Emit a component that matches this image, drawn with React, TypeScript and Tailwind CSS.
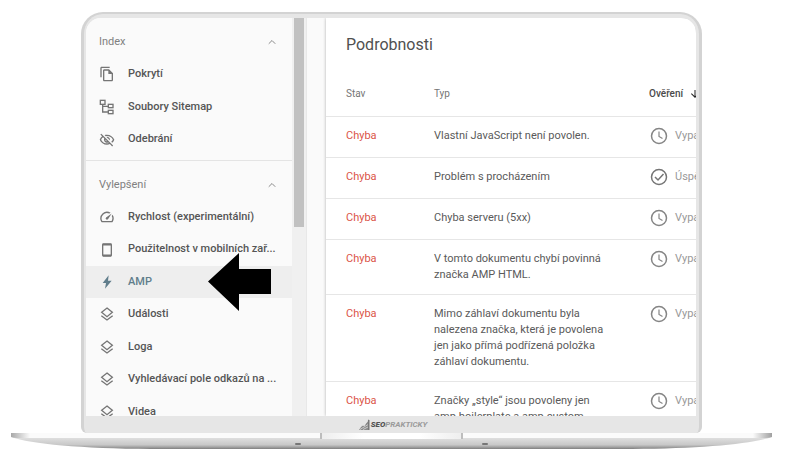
import React from "react";
import type { ReactNode } from "react";
import { ChevronUp } from "lucide-react";
import {
  MdArrowDownward,
  MdOutlineFileCopy,
  MdOutlineSpeed,
  MdOutlineVisibilityOff,
} from "react-icons/md";

function SitemapIcon() {
  return (
    <svg width="16" height="16" viewBox="0 0 24 24" fill="none" stroke="currentColor" strokeWidth="2">
      <rect x="2" y="2" width="7" height="6" />
      <rect x="14" y="8" width="7" height="5" />
      <rect x="14" y="17" width="7" height="5" />
      <path d="M5.500 8v11.500H14M5.500 11H14" />
    </svg>
  );
}

function PhoneIcon() {
  return (
    <svg width="16" height="16" viewBox="0 0 24 24" fill="none" stroke="currentColor" strokeWidth="2">
      <rect x="5.500" y="3" width="13" height="18" rx="1" />
      <path d="M6 4h12M6 20h12" strokeWidth="2.500" />
    </svg>
  );
}

function BoltIcon() {
  return (
    <svg width="16" height="16" viewBox="0 0 24 24" fill="currentColor">
      <path d="M14.500 2 5.500 13.500h5L9 22l10-12h-5.500z" />
    </svg>
  );
}

function LayersIcon() {
  return (
    <svg width="16" height="16" viewBox="0 0 24 24" fill="none" stroke="currentColor" strokeWidth="2">
      <path d="M12 3 20 9.500 12 16 4 9.500z" />
      <path d="M3.500 14.500 12 21l8.500-6.500" />
    </svg>
  );
}

function ClockIcon() {
  return (
    <svg className="shrink-0 text-[#858585]" width="18" height="18" viewBox="0 0 18 18" fill="none" stroke="currentColor" strokeWidth="1.500">
      <circle cx="9" cy="9" r="7.500" />
      <path d="M9 4.500V9.500L12.500 11.500" strokeWidth="1.200" />
    </svg>
  );
}

function PassedIcon() {
  return (
    <svg className="shrink-0 text-[#757575]" width="18" height="18" viewBox="0 0 18 18" fill="none" stroke="currentColor" strokeWidth="1.500">
      <circle cx="9" cy="9" r="7.500" />
      <path d="M5 9l3 3 5.500-6" />
    </svg>
  );
}

type Item = { label: string; icon: ReactNode; active?: boolean };

const indexItems: Item[] = [
  { label: "Pokrytí", icon: <MdOutlineFileCopy size={16} /> },
  { label: "Soubory Sitemap", icon: <SitemapIcon /> },
  { label: "Odebrání", icon: <MdOutlineVisibilityOff size={16} /> },
];

const enhancementItems: Item[] = [
  { label: "Rychlost (experimentální)", icon: <MdOutlineSpeed size={16} /> },
  { label: "Použitelnost v mobilních zař...", icon: <PhoneIcon /> },
  { label: "AMP", icon: <BoltIcon />, active: true },
  { label: "Události", icon: <LayersIcon /> },
  { label: "Loga", icon: <LayersIcon /> },
  { label: "Vyhledávací pole odkazů na ...", icon: <LayersIcon /> },
  { label: "Videa", icon: <LayersIcon /> },
];

const issues = [
  { type: "Vlastní JavaScript není povolen.", check: "Vypa" },
  { type: "Problém s procházením", check: "Úspě", passed: true },
  { type: "Chyba serveru (5xx)", check: "Vypa" },
  { type: "V tomto dokumentu chybí povinná značka AMP HTML.", check: "Vypa" },
  {
    type: "Mimo záhlaví dokumentu byla nalezena značka, která je povolena jen jako přímá podřízená položka záhlaví dokumentu.",
    check: "Vypa",
  },
  { type: "Značky „style“ jsou povoleny jen amp-boilerplate a amp-custom", check: "Vypa" },
];

function SectionHeader({ title }: { title: string }) {
  return (
    <button className="mt-2 flex h-8 w-full items-center justify-between pl-[13px] pr-[14px] text-[11px] text-[#808080]">
      {title}
      <ChevronUp size={12} strokeWidth={2} className="text-[#8a8a8a]" />
    </button>
  );
}

function NavItem({ label, icon, active }: Item) {
  return (
    <li className={active ? "relative bg-[#eeeeee]" : ""}>
      <a
        href="#"
        className={
          "flex h-full items-center gap-[13px] whitespace-nowrap pl-[13px] text-[11px] font-medium " +
          (active ? "text-[#607d8b]" : "text-[#555]")
        }
      >
        <span className={active ? "shrink-0" : "shrink-0 text-[#757575]"}>{icon}</span>
        {label}
      </a>
      {active && (
        <svg
          className="pointer-events-none absolute right-[21px] top-1/2 z-10 -translate-y-1/2"
          width="63"
          height="58"
          viewBox="0 0 63 58"
        >
          <path d="M0 28.500 31 0v16h32v25H31v17z" fill="#000" />
        </svg>
      )}
    </li>
  );
}

function Sidebar() {
  return (
    <nav className="w-[206px] shrink-0 bg-[#fafafa]">
      <SectionHeader title="Index" />
      <ul className="grid h-[98px] auto-rows-fr">
        {indexItems.map((item) => (
          <NavItem key={item.label} {...item} />
        ))}
      </ul>
      <div className="mt-1 border-t border-[#e4e4e4]">
        <SectionHeader title="Vylepšení" />
        <ul className="grid h-[227px] auto-rows-fr">
          {enhancementItems.map((item) => (
            <NavItem key={item.label} {...item} />
          ))}
        </ul>
      </div>
    </nav>
  );
}

function Details() {
  return (
    <main className="min-w-0 flex-1 bg-white shadow-[0_0_3px_rgba(0,0,0,0.3)]">
      <h1 className="px-5 pt-[15px] text-base leading-6 text-[#505050]">Podrobnosti</h1>
      <table className="mt-4 w-full table-fixed border-collapse text-left align-top text-[11px] leading-4">
        <thead>
          <tr className="h-[43px] text-[10px] text-[#757575]">
            <th className="w-[108px] pl-5 font-normal">Stav</th>
            <th className="font-normal">Typ</th>
            <th className="w-[47px] whitespace-nowrap font-medium text-[#4a4a4a]">
              <span className="flex items-center gap-[6px]">
                Ověření
                <MdArrowDownward size={12} className="shrink-0 text-[#222]" />
              </span>
            </th>
          </tr>
        </thead>
        <tbody>
          {issues.map((issue) => (
            <tr key={issue.type} className="h-[41px] border-t border-[#e6e6e6] align-top">
              <td className="pb-[11px] pl-5 pt-[11px] text-[#db5548]">Chyba</td>
              <td className="pb-[11px] pr-[42px] pt-[11px] text-[#5a5a5a]">{issue.type}</td>
              <td className="whitespace-nowrap pb-[11px] pt-[11px] text-[#999]">
                <span className="flex h-4 items-center gap-[7px] pl-px">
                  {issue.passed ? <PassedIcon /> : <ClockIcon />}
                  {issue.check}
                </span>
              </td>
            </tr>
          ))}
        </tbody>
      </table>
    </main>
  );
}

function Logo() {
  return (
    <div className="flex h-[17px] items-center justify-center pl-1 font-['Liberation_Sans_Narrow',Roboto,sans-serif] text-[8px] italic leading-none text-[#9a9a9a]">
      <svg width="12" height="12" viewBox="0 0 12 12" className="shrink-0">
        <path d="M0 11 3 6.500 5.500 7 10 0v11z" fill="#8a8a8a" />
        <path d="M1 10.500 10 5M4 10.500 10 7.500M2 7.500 10 1.500" stroke="#e6e6e6" strokeWidth="0.700" />
        <path d="M9 1h1.500v10H9z" fill="#777" />
      </svg>
      <span>
        <b className="font-black text-[#555]">SEO</b>
        <span className="font-bold">PRAKTICKY</span>
      </span>
    </div>
  );
}

function LaptopBase() {
  return (
    <svg className="block h-[17px] w-full" viewBox="0 0 761 17" preserveAspectRatio="none">
      <defs>
        <linearGradient id="rim" x1="0" x2="1" y1="0" y2="0">
          <stop offset="0" stopColor="#a8a8a8" />
          <stop offset="0.025" stopColor="#fbfbfb" />
          <stop offset="0.975" stopColor="#fbfbfb" />
          <stop offset="1" stopColor="#a0a0a0" />
        </linearGradient>
        <linearGradient id="body" x1="0" x2="0" y1="0" y2="1">
          <stop offset="0" stopColor="#e2e2e2" />
          <stop offset="0.650" stopColor="#c8c8c8" />
          <stop offset="0.850" stopColor="#a0a0a0" />
          <stop offset="1" stopColor="#7e7e7e" />
        </linearGradient>
        <linearGradient id="notch" x1="0" x2="1" y1="0" y2="0">
          <stop offset="0" stopColor="#eeeeee" />
          <stop offset="0.300" stopColor="#ffffff" />
          <stop offset="0.700" stopColor="#ffffff" />
          <stop offset="1" stopColor="#eeeeee" />
        </linearGradient>
      </defs>
      <path d="M0 4C20 11 70 15.500 140 16H621C691 15.500 741 11 761 4z" fill="url(#body)" />
      <path d="M0 0H761V4Q758 5 755 5H6Q3 5 0 4z" fill="url(#rim)" />
      <rect x="309" y="0" width="143" height="6" fill="#bdbdbd" />
      <rect x="311" y="0" width="139" height="6" fill="url(#notch)" />
      <rect x="284" y="10" width="6" height="2" rx="1" fill="#777" />
      <rect x="471" y="10" width="6" height="2" rx="1" fill="#777" />
    </svg>
  );
}

export default function App() {
  return (
    <div className="flex h-screen flex-col bg-white pb-[9px] pl-[11px] pr-[22px] pt-3 font-[Roboto,sans-serif]">
      {/* Lid */}
      <div className="mx-[70px] flex min-h-0 flex-1 flex-col rounded-b-md rounded-t-[22px] border-x-[3px] border-t-2 border-[#d3d3d3] bg-[#e6e6e6] pl-[2px] pr-[3px] pt-1">
        <div className="flex min-h-0 flex-1 overflow-hidden rounded-t-[15px] bg-[#fafafa]">
          <Sidebar />
          {/* Scrollbar */}
          <div className="mr-[19px] w-[15px] shrink-0 border-r border-[#e8e8e8] bg-[#f0f0f0] px-[2px]">
            <div className="h-[209px] bg-[#c1c1c1]" />
          </div>
          <Details />
        </div>
        <Logo />
      </div>
      <LaptopBase />
    </div>
  );
}
